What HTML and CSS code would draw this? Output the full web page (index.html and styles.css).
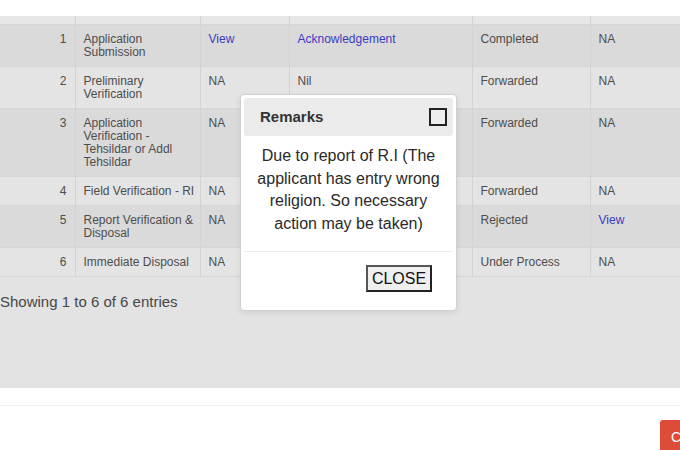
FILE: index.html
```html
<!DOCTYPE html>
<html lang="en">

<head>
  <meta charset="UTF-8">
  <meta name="viewport" content="width=device-width, initial-scale=1.0">
  <title>Application Status</title>
  <link rel="stylesheet" href="styles.css">
</head>

<body>

  <div class="top-bar"></div>

  <!-- Status table, dimmed behind the remarks dialog -->
  <div class="status-panel">
    <table class="status-table">
      <colgroup>
        <col class="col-num">
        <col class="col-stage">
        <col class="col-doc">
        <col class="col-ack">
        <col class="col-state">
        <col>
      </colgroup>
      <thead>
        <tr>
          <th class="num"></th>
          <th></th>
          <th></th>
          <th></th>
          <th></th>
          <th></th>
        </tr>
      </thead>
      <tbody>
        <tr>
          <td class="num">1</td>
          <td class="stage">Application Submission</td>
          <td><a href="#">View</a></td>
          <td><a href="#">Acknowledgement</a></td>
          <td>Completed</td>
          <td>NA</td>
        </tr>
        <tr>
          <td class="num">2</td>
          <td class="stage">Preliminary Verification</td>
          <td>NA</td>
          <td>Nil</td>
          <td>Forwarded</td>
          <td>NA</td>
        </tr>
        <tr>
          <td class="num">3</td>
          <td class="stage">Application Verification - Tehsildar or Addl Tehsildar</td>
          <td>NA</td>
          <td></td>
          <td>Forwarded</td>
          <td>NA</td>
        </tr>
        <tr>
          <td class="num">4</td>
          <td class="stage nowrap">Field Verification - RI</td>
          <td>NA</td>
          <td></td>
          <td>Forwarded</td>
          <td>NA</td>
        </tr>
        <tr>
          <td class="num">5</td>
          <td class="stage">Report Verification &amp; Disposal</td>
          <td>NA</td>
          <td></td>
          <td>Rejected</td>
          <td><a href="#">View</a></td>
        </tr>
        <tr>
          <td class="num">6</td>
          <td class="stage">Immediate Disposal</td>
          <td>NA</td>
          <td></td>
          <td>Under Process</td>
          <td>NA</td>
        </tr>
      </tbody>
    </table>

    <p class="entries-info">Showing 1 to 6 of 6 entries</p>
  </div>

  <!-- Page footer with the close action -->
  <div class="page-footer">
    <button class="btn-danger">C</button>
  </div>

  <!-- Remarks dialog -->
  <div class="modal">
    <div class="modal-header">
      <h4>Remarks</h4>
      <span class="modal-x"></span>
    </div>
    <div class="modal-body">
      Due to report of R.I (The applicant has entry wrong religion. So necessary action may be taken)
    </div>
    <div class="modal-footer">
      <button class="close-btn">CLOSE</button>
    </div>
  </div>

</body>

</html>
```

FILE: styles.css
```css
/* Reset */
* {
  margin: 0;
  padding: 0;
  box-sizing: border-box;
}

body {
  font-family: 'Liberation Sans', Arial, sans-serif;
  background-color: #fff;
  color: #4d4d4d;
  overflow: hidden;
  height: 450px;
}

.top-bar {
  height: 16px;
  background-color: #fff;
}

/* Gray panel holding the table */
.status-panel {
  background-color: #e3e3e3;
  height: 372px;
}

.status-table {
  width: 100%;
  table-layout: fixed;
  border-collapse: collapse;
  font-size: 12px;
  line-height: 13px;
}

.col-num { width: 75px; }
.col-stage { width: 125px; }
.col-doc { width: 89px; }
.col-ack { width: 183px; }
.col-state { width: 118px; }

.status-table th {
  height: 8px;
  background-color: #e6e6e6;
  border-left: 1px solid #d3d3d3;
}

.status-table th.num {
  border-left: none;
}

.status-table td {
  padding: 8px 8px 7px;
  vertical-align: top;
  text-align: left;
  border-top: 1px solid #d6d6d6;
  border-left: 1px solid #d3d3d3;
}

.status-table td.num {
  text-align: right;
  border-left: none;
}

.status-table td.stage {
  padding-right: 2px;
}

.status-table td.nowrap {
  white-space: nowrap;
}

/* Striped rows */
.status-table tbody tr:nth-child(odd) {
  background-color: #dadada;
}

.status-table tbody tr:nth-child(even) {
  background-color: #e4e4e4;
}

.status-table tbody tr:last-child td {
  border-bottom: 1px solid #d6d6d6;
}

.status-table a {
  color: #3b3bc2;
  text-decoration: none;
}

.entries-info {
  font-size: 15px;
  color: #474747;
  padding-top: 16px;
}

/* Footer */
.page-footer {
  margin-top: 17px;
  border-top: 1px solid #f0f0f0;
  padding-top: 14px;
  display: flex;
  justify-content: flex-end;
}

.btn-danger {
  width: 20px;
  height: 34px;
  background-color: #dd4b39;
  color: #fff;
  border: none;
  border-radius: 3px 0 0 3px;
  font-family: inherit;
  font-size: 14px;
  text-align: left;
  padding-left: 11px;
}

/* Remarks dialog */
.modal {
  position: absolute;
  left: 240px;
  top: 94px;
  width: 217px;
  background-color: #fff;
  border: 1px solid #cfcfcf;
  border-radius: 4px;
  padding: 3px;
  box-shadow: 0 2px 6px rgba(0, 0, 0, 0.08);
  color: #222;
}

.modal-header {
  height: 38px;
  background-color: #ebebeb;
  border-radius: 3px;
  display: flex;
  align-items: center;
  justify-content: space-between;
  padding: 0 6px 1px 16px;
}

.modal-header h4 {
  font-size: 15px;
  font-weight: bold;
  color: #333;
}

.modal-x {
  width: 18px;
  height: 18px;
  border: 2px solid #222;
  background-color: #eee;
}

.modal-body {
  padding: 9px 8px 16px;
  font-size: 16px;
  line-height: 22.5px;
  text-align: center;
  color: #2a2a2a;
  border-bottom: 1px solid #ececec;
}

.modal-footer {
  display: flex;
  justify-content: flex-end;
  padding: 13px 21px 15px;
}

.close-btn {
  width: 66px;
  height: 27px;
  font-family: inherit;
  font-size: 16px;
  color: #111;
  background-color: #efefef;
  border: 2px solid #222;
  border-color: #555 #222 #222 #555;
}
```
